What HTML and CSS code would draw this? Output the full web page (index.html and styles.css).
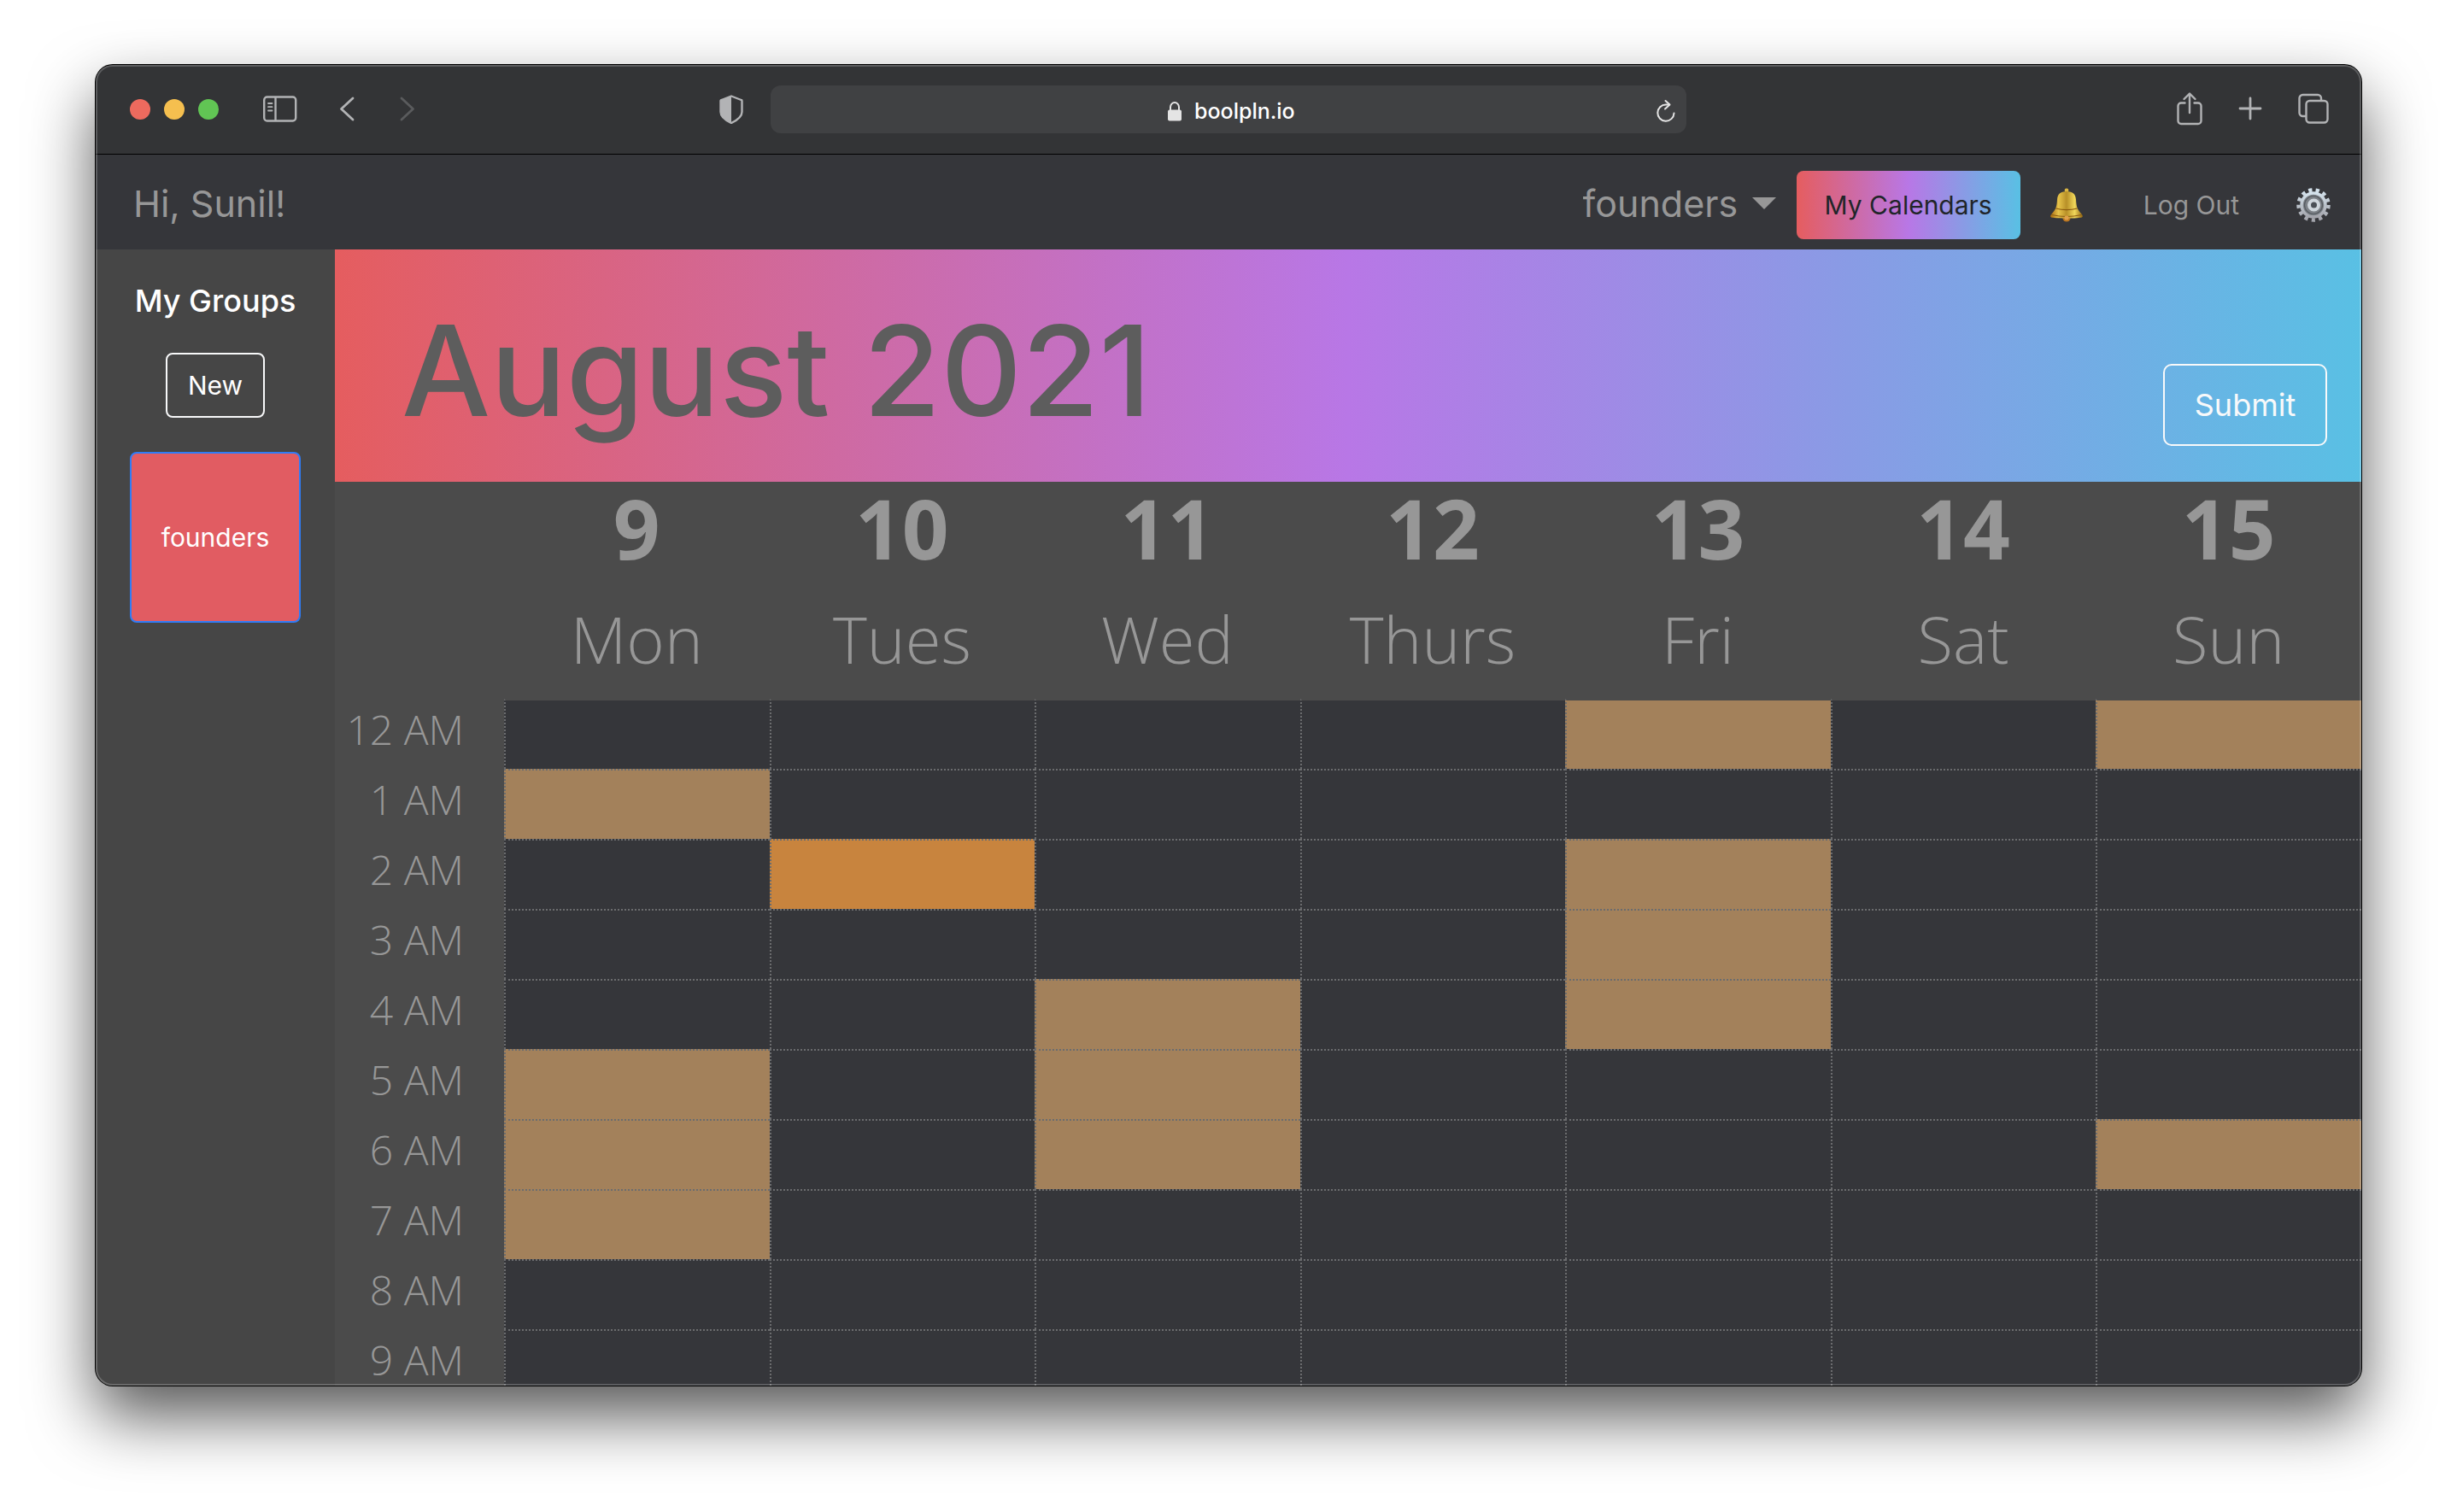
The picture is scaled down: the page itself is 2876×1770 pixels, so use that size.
FILE: index.html
```html
<!DOCTYPE html>
<html lang="en">
<head>
<meta charset="utf-8">
<meta name="viewport" content="width=device-width, initial-scale=1">
<title>boolpln.io</title>
<link rel="stylesheet" href="styles.css">
</head>
<body>
<div class="window">
  <header class="toolbar">
    <div class="toolbar-left">
      <div class="lights">
        <button class="light light-close" type="button" aria-label="Close"></button>
        <button class="light light-min" type="button" aria-label="Minimise"></button>
        <button class="light light-zoom" type="button" aria-label="Zoom"></button>
      </div>
      <button class="icon-btn sidebar-btn" type="button" aria-label="Sidebar">
        <svg width="40" height="32" viewBox="0 0 40 32" fill="none" stroke="currentColor" stroke-width="2.400"><rect x="1.200" y="1.500" width="37" height="28" rx="3.500"/><path d="M14.500 1.500v28"/><path d="M6 9h4.500M6 13.200h4.500M6 17.500h4.500" stroke-linecap="round" stroke-width="1.800"/></svg>
      </button>
      <div class="history">
        <button class="icon-btn" type="button" aria-label="Back">
          <svg width="18" height="30" viewBox="0 0 18 30" fill="none" stroke="currentColor" stroke-width="2.800" stroke-linecap="round" stroke-linejoin="round"><path d="M16 2L2.500 14.500 16 27"/></svg>
        </button>
        <button class="icon-btn dim" type="button" aria-label="Forward">
          <svg width="18" height="30" viewBox="0 0 18 30" fill="none" stroke="currentColor" stroke-width="2.800" stroke-linecap="round" stroke-linejoin="round"><path d="M2 2L15.500 14.500 2 27"/></svg>
        </button>
      </div>
      <button class="icon-btn shield" type="button" aria-label="Privacy report">
        <svg width="28" height="34" viewBox="0 0 28 34"><path d="M14 1.500L25.500 6a1 1 0 0 1 1 1v13c0 5-5 9.500-12.500 13C6.500 29.500 1.500 25 1.500 20V7a1 1 0 0 1 1-1z" fill="none" stroke="currentColor" stroke-width="2.400" stroke-linejoin="round"/><path d="M14 1.500V33C6.500 29.500 1.500 25 1.500 20V6z" fill="currentColor"/></svg>
      </button>
    </div>
    <div class="address">
      <svg class="lock" width="18" height="24" viewBox="0 0 18 24"><path d="M4 12V7.500a5 5.500 0 0 1 10 0V12" fill="none" stroke="currentColor" stroke-width="2"/><rect x="1" y="10.500" width="16" height="13" rx="2" fill="currentColor"/></svg>
      <input class="url" type="text" value="boolpln.io" aria-label="Address">
      <button class="icon-btn reload" type="button" aria-label="Reload">
        <svg width="24" height="28" viewBox="0 0 24 28" fill="none" stroke="currentColor" stroke-width="2" stroke-linecap="round" stroke-linejoin="round"><path d="M21.500 16.500a9.600 9.600 0 1 1-9.500-10h4"/><path d="M11.500 2l5 4.500-5.500 5"/></svg>
      </button>
    </div>
    <div class="toolbar-right">
      <button class="icon-btn" type="button" aria-label="Share">
        <svg width="30" height="40" viewBox="0 0 30 40" fill="none" stroke="currentColor" stroke-width="2.400" stroke-linecap="round" stroke-linejoin="round"><path d="M9.500 13.500H5a3.500 3.500 0 0 0-3.500 3.500V34.500a3.500 3.500 0 0 0 3.500 3.500h20a3.500 3.500 0 0 0 3.500-3.500V17a3.500 3.500 0 0 0-3.500-3.500h-4.500"/><path d="M15 25V3M8.500 9L15 2.500 21.500 9"/></svg>
      </button>
      <button class="icon-btn" type="button" aria-label="New tab">
        <svg width="28" height="28" viewBox="0 0 28 28" fill="none" stroke="currentColor" stroke-width="2.800" stroke-linecap="round"><path d="M14 2v24M2 14h24"/></svg>
      </button>
      <button class="icon-btn" type="button" aria-label="Show all tabs">
        <svg width="36" height="36" viewBox="0 0 36 36" fill="none" stroke="currentColor" stroke-width="2.400"><path d="M9.500 27H5.500A4 4 0 0 1 1.500 23V6A4 4 0 0 1 5.500 2H23A4 4 0 0 1 27 6V9"/><rect x="9.500" y="9" width="25" height="25.500" rx="4"/></svg>
      </button>
    </div>
  </header>

  <nav class="navbar">
    <span class="greeting">Hi, Sunil!</span>
    <div class="group-picker">
      <select class="group-select" aria-label="Group"><option>founders</option></select>
      <svg class="caret" width="28" height="14" viewBox="0 0 28 14"><path d="M0 0h28L14 14z" fill="currentColor"/></svg>
    </div>
    <button class="calendars-btn" type="button">My Calendars</button>
    <button class="icon-btn bell" type="button" aria-label="Notifications">
      <svg width="40" height="40" viewBox="0 0 40 40">
        <defs>
          <linearGradient id="brass" x1="0" x2="1" y1="0" y2="0"><stop offset="0" stop-color="#a8690f"/><stop offset=".25" stop-color="#e6c34a"/><stop offset=".5" stop-color="#b89028"/><stop offset=".75" stop-color="#f0d75a"/><stop offset="1" stop-color="#8f6412"/></linearGradient>
        </defs>
        <circle cx="20" cy="2.800" r="2.400" fill="#d9b544"/>
        <circle cx="20" cy="35" r="4.600" fill="#b87421"/>
        <path d="M20 4C12.500 4 9.500 7.500 9 13.500 8.500 22 7.500 25 2.500 30.500 0 33.500 1 34.500 4 34.800 14 36 26 36 36 34.800c3-.300 4-1.300 1.500-4.300C32.500 25 31.500 22 31 13.500 30.500 7.500 27.500 4 20 4z" fill="url(#brass)"/>
        <path d="M7.500 24c8 2.200 17 2.200 25 0M2.500 31.500c11 2.500 24 2.500 35 0" fill="none" stroke="#8a5a10" stroke-width="1.200"/>
        <circle cx="20" cy="35" r="2.600" fill="#e0a04a"/>
      </svg>
    </button>
    <a class="logout" href="#logout">Log Out</a>
    <button class="icon-btn gear" type="button" aria-label="Settings">
      <svg width="40" height="40" viewBox="0 0 40 40">
        <defs>
          <linearGradient id="steel" x1="0" x2="0" y1="0" y2="1"><stop offset="0" stop-color="#d4e2ec"/><stop offset="1" stop-color="#a4a5ac"/></linearGradient>
        </defs>
        <circle cx="20" cy="20" r="17.500" fill="none" stroke="url(#steel)" stroke-width="4.500" stroke-dasharray="4.200 4.258"/>
        <circle cx="20" cy="20" r="14" fill="#7c8187" stroke="url(#steel)" stroke-width="3.500"/>
        <circle cx="20" cy="20" r="10.500" fill="none" stroke="#565b61" stroke-width="1.200"/>
        <circle cx="20.500" cy="20" r="5.500" fill="#4b5057" stroke="#cfd6dd" stroke-width="4"/>
      </svg>
    </button>
  </nav>

  <div class="content">
    <aside class="sidebar">
      <h2 class="sidebar-title">My Groups</h2>
      <button class="new-btn" type="button">New</button>
      <button class="group-card" type="button">founders</button>
    </aside>

    <main class="main">
      <div class="banner">
        <h1 class="month">August 2021</h1>
        <button class="submit-btn" type="button">Submit</button>
      </div>
      <table class="calendar">
        <colgroup><col class="hour-col"><col span="7"></colgroup>
        <thead>
          <tr>
            <td class="corner"></td>
            <th scope="col"><span class="date">9</span><span class="day">Mon</span></th>
            <th scope="col"><span class="date">10</span><span class="day">Tues</span></th>
            <th scope="col"><span class="date">11</span><span class="day">Wed</span></th>
            <th scope="col"><span class="date">12</span><span class="day">Thurs</span></th>
            <th scope="col"><span class="date">13</span><span class="day">Fri</span></th>
            <th scope="col"><span class="date">14</span><span class="day">Sat</span></th>
            <th scope="col"><span class="date">15</span><span class="day">Sun</span></th>
          </tr>
        </thead>
        <tbody>
          <tr><th scope="row">12 AM</th><td></td><td></td><td></td><td></td><td class="some"></td><td></td><td class="some"></td></tr>
          <tr><th scope="row">1 AM</th><td class="some"></td><td></td><td></td><td></td><td></td><td></td><td></td></tr>
          <tr><th scope="row">2 AM</th><td></td><td class="most"></td><td></td><td></td><td class="some"></td><td></td><td></td></tr>
          <tr><th scope="row">3 AM</th><td></td><td></td><td></td><td></td><td class="some"></td><td></td><td></td></tr>
          <tr><th scope="row">4 AM</th><td></td><td></td><td class="some"></td><td></td><td class="some"></td><td></td><td></td></tr>
          <tr><th scope="row">5 AM</th><td class="some"></td><td></td><td class="some"></td><td></td><td></td><td></td><td></td></tr>
          <tr><th scope="row">6 AM</th><td class="some"></td><td></td><td class="some"></td><td></td><td></td><td></td><td class="some"></td></tr>
          <tr><th scope="row">7 AM</th><td class="some"></td><td></td><td></td><td></td><td></td><td></td><td></td></tr>
          <tr><th scope="row">8 AM</th><td></td><td></td><td></td><td></td><td></td><td></td><td></td></tr>
          <tr><th scope="row">9 AM</th><td></td><td></td><td></td><td></td><td></td><td></td><td></td></tr>
        </tbody>
      </table>
    </main>
  </div>
</div>
</body>
</html>
```
FILE: styles.css
```css
:root {
  --rainbow: linear-gradient(to right, #e55d5f, #b877e6 50%, #59c0e4);
  --muted: #979797;
  --ink: #35363a;
  --panel: #4b4b4b;
}

* { box-sizing: border-box; }

body {
  margin: 0;
  height: 100vh;
  padding: 76px 112px 148px;
  display: flex;
  background: #fff;
  font-family: Inter, "Liberation Sans", sans-serif;
  font-size: 30px;
  color: #fff;
}

button, input, select { font: inherit; color: inherit; }
button { margin: 0; padding: 0; border: 0; background: none; }

/* Browser window */
.window {
  position: relative;
  flex: 1;
  min-width: 0;
  display: flex;
  flex-direction: column;
  overflow: hidden;
  border-radius: 20px;
  background: var(--panel);
  box-shadow: 0 0 0 1px #000, 0 36px 76px rgba(0, 0, 0, .66);
}
.window::after {
  content: "";
  position: absolute;
  inset: 0;
  border-radius: 20px;
  box-shadow: inset 0 0 0 2px rgba(255, 255, 255, .2);
  pointer-events: none;
}

.toolbar {
  flex: none;
  height: 105px;
  display: grid;
  grid-template-columns: 1fr minmax(0, 1072px) 1fr;
  align-items: center;
  border-bottom: 1px solid #000;
  background: #333436;
  color: #b2b3b5;
}
.toolbar-left { display: flex; align-items: center; padding: 0 32px 0 40px; }
.lights { display: flex; gap: 16px; }
.light { width: 24px; height: 24px; border-radius: 50%; }
.light-close { background: #ed6a5e; }
.light-min { background: #f5bf4f; }
.light-zoom { background: #61c554; }
.icon-btn { display: flex; }
.sidebar-btn { margin-left: 52px; }
.history { display: flex; gap: 53px; margin-left: 49px; }
.dim { color: #5a5b5d; }
.shield { margin-left: auto; }

.address {
  position: relative;
  height: 56px;
  display: flex;
  align-items: center;
  justify-content: center;
  gap: 14px;
  padding: 3px 0 0 8px;
  border-radius: 12px;
  background: #404143;
  color: #e4e4e4;
}
.url {
  width: 120px;
  padding: 0;
  border: 0;
  background: none;
  font-size: 25px;
  font-weight: 500;
  line-height: 32px;
  color: #fff;
}
.reload { position: absolute; right: 12px; }

.toolbar-right {
  display: flex;
  align-items: center;
  justify-content: flex-end;
  gap: 42px;
  padding: 0 38px 3px 0;
}

/* Site navigation */
.navbar {
  flex: none;
  height: 111px;
  display: flex;
  align-items: center;
  padding: 6px 36px 0 44px;
  background: var(--ink);
  color: var(--muted);
}
.greeting { margin-right: auto; font-size: 43px; line-height: 64px; padding-bottom: 4px; }
.group-picker { display: flex; align-items: center; gap: 16px; padding-bottom: 4px; }
.group-select {
  appearance: none;
  border: 0;
  padding: 0;
  background: none;
  font-size: 43px;
  line-height: 64px;
}
.calendars-btn {
  height: 80px;
  margin-left: 24px;
  padding: 0 33px;
  border-radius: 8px;
  background: var(--rainbow);
  color: #212529;
}
.bell { margin-left: 34px; }
.logout { margin-left: 70px; color: inherit; text-decoration: none; }
.gear { margin-left: 67px; }

/* Page body */
.content { flex: 1; min-height: 0; display: flex; }
.sidebar {
  flex: none;
  width: 280px;
  display: flex;
  flex-direction: column;
  align-items: center;
  padding-top: 36px;
  background: #464646;
}
.sidebar-title { margin: 0; font-size: 36px; font-weight: 500; line-height: 48px; }
.new-btn {
  width: 116px;
  height: 76px;
  margin-top: 37px;
  border: 2px solid #f8f9fa;
  border-radius: 8px;
}
.group-card {
  width: 200px;
  height: 200px;
  margin-top: 40px;
  border: 2px solid #2f7cf6;
  border-radius: 8px;
  background: #e15c62;
}

.main { flex: 1; min-width: 0; overflow: hidden; background: var(--panel); }
.banner {
  height: 272px;
  display: flex;
  align-items: flex-end;
  justify-content: space-between;
  padding: 0 40px 42px 78px;
  background: var(--rainbow);
}
.month { margin: 0; font-size: 147px; font-weight: 500; line-height: 176px; color: #5d5d5d; }
.submit-btn {
  width: 192px;
  height: 96px;
  border: 2px solid #f8f9fa;
  border-radius: 10px;
  font-size: 36px;
  color: #f8f9fa;
}

/* Week grid */
.calendar {
  width: 100%;
  table-layout: fixed;
  border-collapse: separate;
  border-spacing: 0;
  font-family: "Open Sans", "Noto Sans", sans-serif;
  color: var(--muted);
}
.hour-col { width: 198px; }
.calendar thead th { height: 254px; padding: 6px 0 0; vertical-align: top; font-weight: 300; }
.date { display: block; font-size: 96px; font-weight: 700; line-height: 96px; }
.day { display: block; margin-top: 44px; font-size: 76px; font-weight: 300; line-height: 76px; }
.calendar tbody th {
  height: 82px;
  padding: 0 47px 10px 0;
  font-size: 48px;
  font-weight: 300;
  line-height: 64px;
  text-align: right;
  white-space: nowrap;
}
.calendar tbody td {
  padding: 0;
  border-top: 2px dotted #6b6c6e;
  border-left: 2px dotted #6b6c6e;
  background-color: var(--ink);
}
.calendar tbody tr:first-child td { border-top: 2px solid var(--panel); }
.calendar tbody .some { background-color: #a3815b; }
.calendar tbody .most { background-color: #c8843e; }
```
